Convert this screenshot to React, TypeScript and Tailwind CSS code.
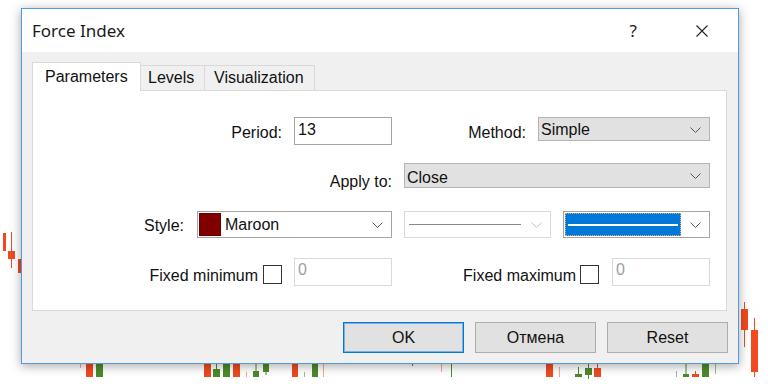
import React from "react";

const F = "font-['Liberation_Sans',Arial,sans-serif]";

function Chevron({ color = "#555555" }: { color?: string }) {
  return (
    <svg width="11" height="6" viewBox="0 0 11 6" className="shrink-0">
      <path d="M0.5 0.5 L5.5 5.5 L10.5 0.5" fill="none" stroke={color} strokeWidth="1" />
    </svg>
  );
}

type C = { x: number; w: number; y1: number; y2: number; c: string; wx?: number; wy1?: number; wy2?: number };
const R = "#ef4a20";
const RL = "#f5a590";
const G = "#4d8a2b";
const GL = "#9dbf8a";

const candles: C[] = [
  { x: 3, w: 3, y1: 233, y2: 251, c: R },
  { x: 8, w: 7, y1: 251, y2: 259, c: R, wx: 11.5, wy1: 232, wy2: 268 },
  { x: 18, w: 4, y1: 259, y2: 273, c: R },
  { x: 80, w: 1, y1: 364, y2: 368, c: RL },
  { x: 86, w: 7, y1: 362, y2: 377, c: R },
  { x: 96, w: 7, y1: 362, y2: 377, c: G },
  { x: 204, w: 7, y1: 362, y2: 377, c: R },
  { x: 213, w: 7, y1: 369, y2: 377, c: G, wx: 216.5, wy1: 362, wy2: 369 },
  { x: 223, w: 7, y1: 362, y2: 377, c: G },
  { x: 233, w: 7, y1: 362, y2: 377, c: R },
  { x: 246, w: 1, y1: 372, y2: 377, c: RL },
  { x: 253, w: 6, y1: 371, y2: 377, c: G, wx: 256, wy1: 362, wy2: 371 },
  { x: 263, w: 6, y1: 362, y2: 372, c: G, wx: 266, wy1: 372, wy2: 375 },
  { x: 292, w: 6, y1: 362, y2: 377, c: R },
  { x: 304, w: 1, y1: 372, y2: 377, c: GL },
  { x: 312, w: 6, y1: 362, y2: 377, c: G },
  { x: 323, w: 1, y1: 362, y2: 377, c: RL },
  { x: 412, w: 1, y1: 362, y2: 366, c: G },
  { x: 441, w: 1, y1: 362, y2: 372, c: RL },
  { x: 451, w: 1, y1: 362, y2: 377, c: G },
  { x: 546, w: 7, y1: 362, y2: 377, c: R },
  { x: 559, w: 1, y1: 367, y2: 377, c: RL },
  { x: 575, w: 7, y1: 374, y2: 377, c: G, wx: 578.5, wy1: 367, wy2: 374 },
  { x: 585, w: 7, y1: 368, y2: 375, c: G, wx: 588.5, wy1: 362, wy2: 379 },
  { x: 594, w: 7, y1: 368, y2: 377, c: R, wx: 597.5, wy1: 362, wy2: 368 },
  { x: 676, w: 1, y1: 371, y2: 377, c: GL },
  { x: 683, w: 6, y1: 374, y2: 377, c: G, wx: 686, wy1: 362, wy2: 374 },
  { x: 692, w: 7, y1: 374, y2: 377, c: R, wx: 695.5, wy1: 371, wy2: 374 },
  { x: 702, w: 7, y1: 362, y2: 377, c: G },
  { x: 715, w: 1, y1: 362, y2: 374, c: GL },
  { x: 741, w: 7, y1: 309, y2: 330, c: R, wx: 744.5, wy1: 302, wy2: 347 },
  { x: 751, w: 7, y1: 330, y2: 372, c: R, wx: 754.5, wy1: 318, wy2: 377 },
];

function Chart() {
  return (
    <svg width="768" height="384" viewBox="0 0 768 384" className="absolute left-0 top-0">
      {candles.map((k, i) => (
        <g key={i}>
          {k.wx !== undefined && (
            <line x1={k.wx} x2={k.wx} y1={k.wy1} y2={k.wy2} stroke={k.c} strokeWidth="1" />
          )}
          <rect x={k.x} y={k.y1} width={k.w} height={k.y2 - k.y1} fill={k.c} />
        </g>
      ))}
    </svg>
  );
}

export default function App() {
  return (
    <div className={`relative w-[768px] h-[384px] overflow-hidden bg-white ${F} text-[16px] text-[#111]`}>
      <Chart />
      <div className="absolute left-[21px] top-[8px] w-[718px] h-[356px] border border-[#4f9be0] bg-[#f0f0f0] shadow-[0_2px_10px_rgba(0,0,0,0.35)] flex flex-col">
        {/* title bar */}
        <div className="h-[43px] bg-white flex items-start shrink-0">
          <div className="pl-[10px] pt-[10px] font-['Noto_Sans',sans-serif] text-[17px] leading-[23px] text-[#1a1a1a]">
            Force Index
          </div>
          <div className="ml-auto pt-[10px] font-['Noto_Sans',sans-serif] text-[17px] leading-[23px] text-[#1a1a1a]">
            ?
          </div>
          <div className="ml-[59px] mr-[30px] mt-[16px]">
            <svg width="12" height="12" viewBox="0 0 12 12">
              <path d="M0.5 0.5 L11.5 11.5 M11.5 0.5 L0.5 11.5" stroke="#222" strokeWidth="1.1" fill="none" />
            </svg>
          </div>
        </div>

        {/* body */}
        <div className="flex-1 flex flex-col pl-[10px] pt-[10px]">
          {/* tabs */}
          <div className="flex items-end h-[28px] relative z-10">
            <div className="w-[109px] h-[29px] -mb-[1px] bg-white border border-b-0 border-[#d9d9d9] pl-[12px] pt-[4.5px] leading-[18px]">
              Parameters
            </div>
            <div className="w-[64px] h-[25px] bg-[#f0f0f0] border-t border-r border-[#d9d9d9] pl-[7px] pt-[2.5px] leading-[18px]">
              Levels
            </div>
            <div className="w-[110px] h-[25px] bg-[#f0f0f0] border-t border-r border-[#d9d9d9] pl-[9px] pt-[2.5px] leading-[18px]">
              Visualization
            </div>
          </div>

          {/* panel */}
          <div className="w-[695px] h-[221px] bg-white border border-[#d9d9d9] flex flex-col pt-[26px] leading-[18px]">
            {/* row 1 */}
            <div className="flex items-start h-[28px]">
              <div className="w-[249px] text-right pt-[6.5px]">Period:</div>
              <div className="ml-[12px] w-[98px] h-[28px] border border-[#a5a5a5] bg-white pl-[3px] pt-[2.5px]">13</div>
              <div className="w-[134px] text-right pt-[6.5px]">Method:</div>
              <div className="ml-[12px] w-[172px] h-[24px] border border-[#b4b4b4] bg-[#e1e1e1] flex items-start pl-[2px] pt-[3px]">
                <span>Simple</span>
                <span className="ml-auto mr-[8px] mt-[6px]">
                  <Chevron />
                </span>
              </div>
            </div>

            {/* row 2 */}
            <div className="flex items-start h-[25px] mt-[18px]">
              <div className="w-[359px] text-right pt-[9.5px]">Apply to:</div>
              <div className="ml-[12px] w-[306px] h-[25px] border border-[#b4b4b4] bg-[#e1e1e1] flex items-start pl-[2px] pt-[4.5px]">
                <span>Close</span>
                <span className="ml-auto mr-[8px] mt-[4px]">
                  <Chevron />
                </span>
              </div>
            </div>

            {/* row 3 */}
            <div className="flex items-start h-[27px] mt-[23px]">
              <div className="w-[151px] text-right pt-[5.5px]">Style:</div>
              <div className="ml-[13px] w-[195px] h-[27px] border border-[#a5a5a5] bg-white flex items-center p-[1px]">
                <div className="w-[22px] h-[23px] bg-[#800000] border border-[#6a0000]" />
                <span className="ml-[4px] mt-[1px]">Maroon</span>
                <span className="ml-auto mr-[7px]">
                  <Chevron />
                </span>
              </div>
              <div className="ml-[12px] w-[147px] h-[27px] border border-[#dadada] bg-white flex items-center pl-[4px]">
                <div className="w-[112px] h-[1.5px] bg-[#8a8a8a]" />
                <span className="ml-auto mr-[8px]">
                  <Chevron color="#c4c4c4" />
                </span>
              </div>
              <div className="ml-[12px] w-[147px] h-[27px] border border-[#a5a5a5] bg-white flex items-center p-[1px]">
                <div className="w-[116px] h-[23px] bg-[#0078d7] outline outline-1 outline-dotted outline-[#e6b487] -outline-offset-1 flex items-center px-[3px]">
                  <div className="w-full h-[2px] bg-white" />
                </div>
                <span className="ml-auto mr-[7px]">
                  <Chevron />
                </span>
              </div>
            </div>

            {/* row 4 */}
            <div className="flex items-start h-[28px] mt-[20px]">
              <div className="w-[225px] text-right pt-[8.5px]">Fixed minimum</div>
              <div className="ml-[5px] mt-[7px] w-[19px] h-[19px] border-[1.5px] border-[#333] bg-white" />
              <div className="ml-[12px] w-[98px] h-[28px] border border-[#dadada] bg-white pl-[3px] pt-[1.5px] text-[#a0a0a0]">0</div>
              <div className="w-[184px] text-right pt-[8.5px]">Fixed maximum</div>
              <div className="ml-[4px] mt-[7px] w-[19px] h-[19px] border-[1.5px] border-[#333] bg-white" />
              <div className="ml-[13px] w-[98px] h-[28px] border border-[#dadada] bg-white pl-[3px] pt-[1.5px] text-[#a0a0a0]">0</div>
            </div>
          </div>

          {/* buttons */}
          <div className="flex justify-end gap-[11px] mt-[11px] pr-[10px]">
            <div className="w-[121px] h-[31px] bg-[#e1e1e1] border border-[#0078d7] shadow-[inset_0_0_0_1px_rgba(0,120,215,0.45)] flex items-center justify-center">
              OK
            </div>
            <div className="w-[121px] h-[31px] bg-[#e1e1e1] border border-[#adadad] flex items-center justify-center">
              Отмена
            </div>
            <div className="w-[121px] h-[31px] bg-[#e1e1e1] border border-[#adadad] flex items-center justify-center">
              Reset
            </div>
          </div>
        </div>
      </div>
    </div>
  );
}
